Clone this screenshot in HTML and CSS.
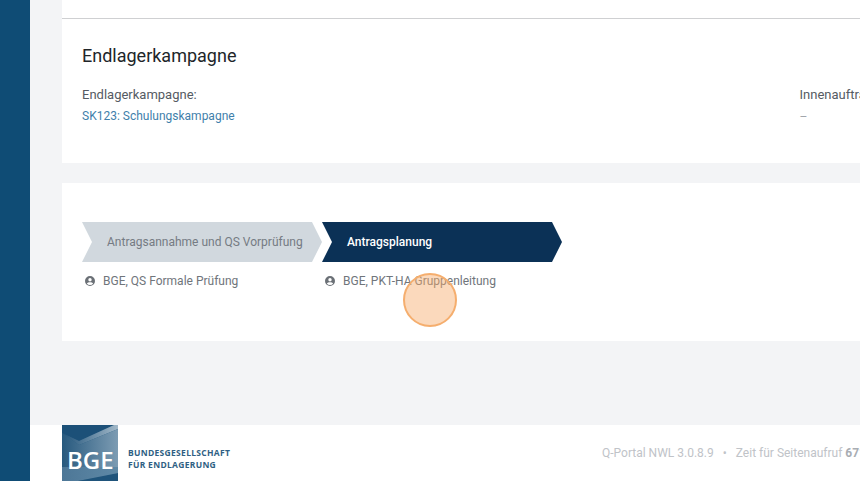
FILE: index.html
```html
<!DOCTYPE html>
<html lang="de">
<head>
<meta charset="utf-8">
<title>Q-Portal NWL</title>
<link rel="stylesheet" href="styles.css">
</head>
<body>
<div class="app">
  <aside class="sidebar"></aside>
  <div class="main">
    <div class="content">
      <section class="card card-top">
        <div class="top-rest"></div>
        <div class="card-body">
          <h2 class="card-title">Endlagerkampagne</h2>
          <div class="fields">
            <div class="field">
              <div class="field-label">Endlagerkampagne:</div>
              <a class="field-link">SK123: Schulungskampagne</a>
            </div>
            <div class="field field-right">
              <div class="field-label">Innenauftrag:</div>
              <div class="field-empty">–</div>
            </div>
          </div>
        </div>
      </section>
      <section class="card card-steps">
        <div class="steps">
          <div class="step">
            <div class="chevron chevron-done">Antragsannahme und QS Vorprüfung</div>
            <div class="assignee">
              <svg class="user-icon" viewBox="0 0 24 24"><path fill="#6b7076" fill-rule="evenodd" d="M12 2a10 10 0 1 0 0 20 10 10 0 0 0 0-20zm0 4a3.400 3.400 0 1 1 0 6.800a3.400 3.400 0 0 1 0-6.800zm0 14a8 8 0 0 1-6.300-3.100c.9-1.700 3.700-2.600 6.300-2.600s5.400.9 6.300 2.600A8 8 0 0 1 12 20z"/></svg>
              <span>BGE, QS Formale Prüfung</span>
            </div>
          </div>
          <div class="step">
            <div class="chevron chevron-active">Antragsplanung</div>
            <div class="assignee">
              <svg class="user-icon" viewBox="0 0 24 24"><path fill="#6b7076" fill-rule="evenodd" d="M12 2a10 10 0 1 0 0 20 10 10 0 0 0 0-20zm0 4a3.400 3.400 0 1 1 0 6.800a3.400 3.400 0 0 1 0-6.800zm0 14a8 8 0 0 1-6.300-3.100c.9-1.700 3.700-2.600 6.300-2.600s5.400.9 6.300 2.600A8 8 0 0 1 12 20z"/></svg>
              <span>BGE, PKT-HA Gruppenleitung</span>
            </div>
          </div>
        </div>
      </section>
    </div>
    <footer class="footer">
      <div class="brand">
        <div class="logo">
          <svg class="logo-art" viewBox="0 0 56 56">
            <defs>
              <linearGradient id="lg1" x1="0" y1="0" x2="1" y2="0"><stop offset="0" stop-color="#1f5279"/><stop offset="1" stop-color="#a3b9c9"/></linearGradient>
              <linearGradient id="lg2" x1="0" y1="0" x2="1" y2="0"><stop offset="0" stop-color="#27597e"/><stop offset="1" stop-color="#7d9cb3"/></linearGradient>
              <linearGradient id="lg3" x1="0" y1="0" x2="1" y2="0"><stop offset="0" stop-color="#4d7797"/><stop offset="1" stop-color="#5f89a6"/></linearGradient>
            </defs>
            <rect width="56" height="56" fill="#255a80"/>
            <polygon points="0,0 52,0 17,16 0,8" fill="#1c5078"/>
            <polygon points="52,0 56,0 56,4 17,20 0,8 17,16" fill="url(#lg1)"/>
            <polygon points="0,8 17,20 56,4 56,56 0,56" fill="url(#lg2)"/>
            <polygon points="0,42 56,42 56,48 16,56 0,56" fill="url(#lg3)"/>
            <polygon points="56,48 56,56 16,56" fill="#1f547b"/>
          </svg>
          <span class="logo-text">BGE</span>
        </div>
        <div class="brand-name">BUNDESGESELLSCHAFT<br>FÜR ENDLAGERUNG</div>
      </div>
      <div class="meta">Q-Portal NWL 3.0.8.9<span class="dot">•</span>Zeit für Seitenaufruf <b>671 ms</b></div>
    </footer>
  </div>
</div>
<div class="cursor"></div>
</body>
</html>
```

FILE: styles.css
```css
html, body {
  margin: 0;
  height: 100%;
  overflow: hidden;
}
body {
  font-family: Roboto, "Liberation Sans", sans-serif;
  background: #f3f4f6;
}
.app {
  display: flex;
  width: 860px;
  height: 481px;
  overflow: hidden;
}
.sidebar {
  flex: 0 0 30px;
  background: #0f4c75;
}
.main {
  flex: 1;
  min-width: 0;
  display: flex;
  flex-direction: column;
  justify-content: space-between;
  overflow: hidden;
}
.content {
  padding-left: 32px;
  display: flex;
  flex-direction: column;
  gap: 20px;
}
.card {
  background: #fff;
  width: 900px;
}
.card-top {
  height: 163px;
}
.top-rest {
  height: 18px;
  border-bottom: 1px solid #cfd0d2;
}
.card-body {
  padding: 26px 20px 0;
}
.card-title {
  margin: 0;
  font-size: 18px;
  line-height: 21px;
  font-weight: 400;
  color: #212529;
}
.fields {
  display: flex;
  margin-top: 21px;
}
.field {
  flex: 0 0 717.5px;
}
.field-label {
  font-size: 13px;
  line-height: 16px;
  color: #555b63;
}
.field-link {
  display: block;
  margin-top: 6px;
  font-size: 12px;
  line-height: 14px;
  color: #3f7fab;
}
.field-empty {
  margin-top: 7px;
  font-size: 12px;
  line-height: 14px;
  color: #a2a6ac;
}
.card-steps {
  height: 158px;
}
.steps {
  display: flex;
  padding: 39px 20px 0;
}
.step {
  width: 240px;
}
.chevron {
  width: 240px;
  height: 40px;
  box-sizing: border-box;
  padding-left: 25px;
  font-size: 12px;
  line-height: 40px;
  clip-path: polygon(0 0, 230px 0, 240px 50%, 230px 100%, 0 100%, 10px 50%);
}
.chevron-done {
  background: #d1d8de;
  color: #757b83;
}
.chevron-active {
  background: #0b3156;
  color: #fff;
  font-weight: 500;
}
.assignee {
  display: flex;
  align-items: center;
  gap: 7px;
  margin-top: 11px;
  padding-left: 2px;
  font-size: 12px;
  line-height: 16px;
  color: #70757b;
}
.user-icon {
  width: 12px;
  height: 12px;
  flex: none;
}
.footer {
  height: 56px;
  background: #fff;
  display: flex;
  align-items: center;
  padding-left: 32px;
  white-space: nowrap;
}
.brand {
  display: flex;
  align-items: center;
  gap: 10px;
  flex: 0 0 540px;
}
.logo {
  position: relative;
  width: 56px;
  height: 56px;
}
.logo-art {
  display: block;
  width: 56px;
  height: 56px;
}
.logo-text {
  position: absolute;
  left: 5px;
  top: 22px;
  font-family: "Open Sans", sans-serif;
  font-size: 24px;
  line-height: 25px;
  font-weight: 600;
  color: #fff;
}
.brand-name {
  margin-top: 12px;
  font-family: "Open Sans", sans-serif;
  font-size: 8.500px;
  line-height: 12px;
  font-weight: 700;
  color: #2f5f83;
  letter-spacing: .3px;
}
.meta {
  font-size: 12px;
  color: #c0c3c8;
}
.meta b {
  color: #a9adb3;
  font-weight: 700;
}
.dot {
  margin: 0 9px;
}
.cursor {
  position: absolute;
  left: 403px;
  top: 272.500px;
  width: 54px;
  height: 54px;
  box-sizing: border-box;
  border-radius: 50%;
  background: rgba(247, 171, 107, .45);
  border: 2px solid #f5ae6e;
}
```
